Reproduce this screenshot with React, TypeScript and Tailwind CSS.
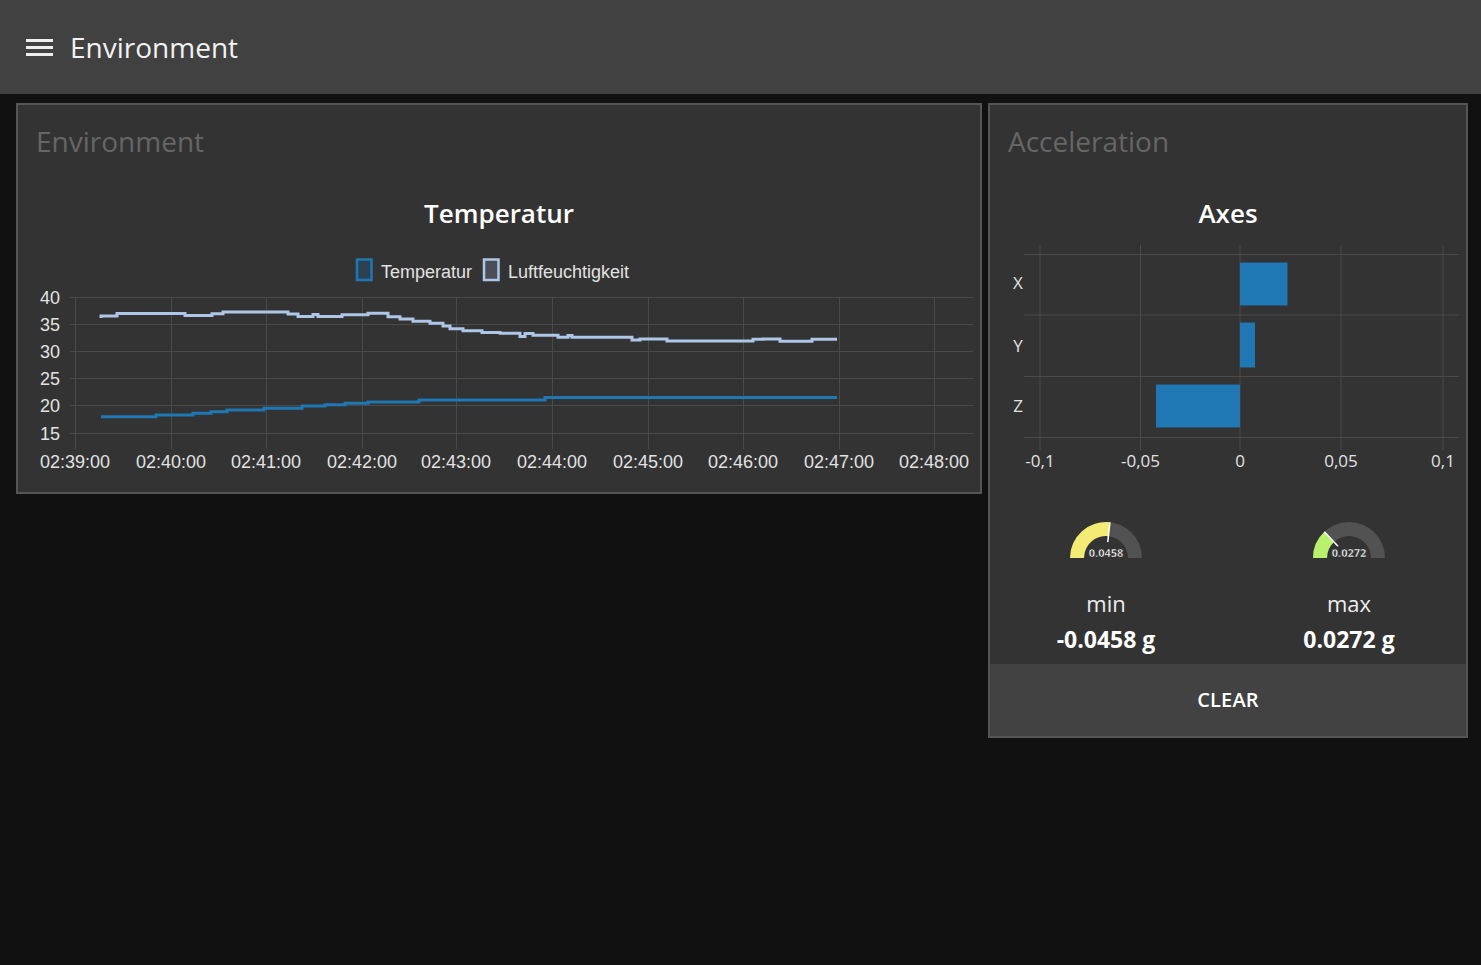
import React from 'react';

const ui = { fontFamily: '"Open Sans", "Noto Sans", sans-serif' };
const chartFont = '"Liberation Sans", Arial, sans-serif';
const uiFont = '"Open Sans", "Noto Sans", sans-serif';

const xTicks = [
  [75, '02:39:00'],
  [171, '02:40:00'],
  [266, '02:41:00'],
  [362, '02:42:00'],
  [456, '02:43:00'],
  [552, '02:44:00'],
  [648, '02:45:00'],
  [743, '02:46:00'],
  [839, '02:47:00'],
  [934, '02:48:00'],
] as const;

const yTicks = [
  [297, '40'],
  [324, '35'],
  [351, '30'],
  [378, '25'],
  [405, '20'],
  [433, '15'],
] as const;

const humidity =
  'M101,318 V316 H117 V313.5 H185 V315.5 H212 V313.7 H223 V312 H288 V314 H298 V316.5 H313 V314.5 H318 V316.5 H342 V314.7 H368 V313.3 H388 V316.7 H400 V319 H413 V321.3 H430 V323.3 H443 V326 H450 V328.7 H463 V330.7 H482 V332.5 H500 V333.3 H520 V336.5 H525 V333.5 H533 V335.3 H558 V337.3 H568 V335.5 H572 V337.3 H632 V340 H640 V339 H667 V341 H753 V339.3 H763 V339 H780 V341.3 H812 V339.3 H837';

const temperature =
  'M101,416.7 H156 V415 H193 V413.3 H211 V411.7 H227 V410 H264 V408.3 H302 V406 H325 V404.7 H345 V403.3 H368 V402 H419 V400 H545 V397.5 H837';

function TempChart() {
  return (
    <svg width={962} height={333} viewBox="18 159 962 333" className="block">
      <text x={499} y={223} textAnchor="middle" fill="#ffffff" fontSize={26} fontWeight={600} fontFamily={uiFont}>
        Temperatur
      </text>
      {/* legend */}
      <rect x={357} y={259.5} width={14.5} height={20.5} fill="#2b4153" stroke="#1f77b4" strokeWidth={2.5} />
      <text x={381} y={277.5} fill="#e2e2e2" fontSize={18} fontFamily={chartFont}>
        Temperatur
      </text>
      <rect x={484} y={259.5} width={14.5} height={20.5} fill="#4a4f57" stroke="#aec7e8" strokeWidth={2.5} />
      <text x={508} y={277.5} fill="#e2e2e2" fontSize={18} fontFamily={chartFont}>
        Luftfeuchtigkeit
      </text>
      {/* grid */}
      {yTicks.map(([y, label]) => (
        <g key={label}>
          <line x1={70} x2={973} y1={y + 0.5} y2={y + 0.5} stroke="#4a4a4a" strokeWidth={1} />
          <text x={60} y={y + 6.5} textAnchor="end" fill="#e2e2e2" fontSize={18} fontFamily={chartFont}>
            {label}
          </text>
        </g>
      ))}
      {xTicks.map(([x, label]) => (
        <g key={label}>
          <line x1={x + 0.5} x2={x + 0.5} y1={297} y2={449} stroke="#4a4a4a" strokeWidth={1} />
          <text x={x} y={468} textAnchor="middle" fill="#e2e2e2" fontSize={18} fontFamily={chartFont}>
            {label}
          </text>
        </g>
      ))}
      <path d={humidity} fill="none" stroke="#aec7e8" strokeWidth={3} />
      <path d={temperature} fill="none" stroke="#1f77b4" strokeWidth={3} />
    </svg>
  );
}

const barX = [
  [1040, '-0,1'],
  [1140.5, '-0,05'],
  [1240, '0'],
  [1341, '0,05'],
  [1443, '0,1'],
] as const;

function AxesChart() {
  return (
    <svg width={476} height={321} viewBox="990 159 476 321" className="block">
      <text x={1228} y={223} textAnchor="middle" fill="#ffffff" fontSize={26} fontWeight={600} fontFamily={uiFont}>
        Axes
      </text>
      {[254.5, 315, 376.5, 437.5].map((y) => (
        <line key={y} x1={1024} x2={1459} y1={y} y2={y} stroke="#4a4a4a" strokeWidth={1} />
      ))}
      {barX.map(([x, label]) => (
        <g key={label}>
          <line x1={x} x2={x} y1={245} y2={450} stroke="#4a4a4a" strokeWidth={1} />
          <text x={x} y={467} textAnchor="middle" fill="#e2e2e2" fontSize={17} fontFamily={uiFont}>
            {label}
          </text>
        </g>
      ))}
      <rect x={1240} y={262.5} width={47.5} height={43} fill="#1f77b4" />
      <rect x={1240} y={322.5} width={15} height={45} fill="#1f77b4" />
      <rect x={1156} y={384.5} width={84} height={43} fill="#1f77b4" />
      {[
        [283, 'X'],
        [346, 'Y'],
        [406, 'Z'],
      ].map(([y, l]) => (
        <text key={l} x={1018} y={(y as number) + 6} textAnchor="middle" fill="#e2e2e2" fontSize={17} fontFamily={uiFont}>
          {l}
        </text>
      ))}
    </svg>
  );
}

function Gauge({ frac, color, label }: { frac: number; color: string; label: string }) {
  const cx = 40;
  const cy = 38;
  const R = 36;
  const r = 22;
  const a = Math.PI * (1 - frac);
  const ox = cx + R * Math.cos(a);
  const oy = cy - R * Math.sin(a);
  const ix = cx + r * Math.cos(a);
  const iy = cy - r * Math.sin(a);
  const nx = cx + 16 * Math.cos(a);
  const ny = cy - 16 * Math.sin(a);
  const full = `M${cx - R},${cy} A${R},${R} 0 0 1 ${cx + R},${cy} L${cx + r},${cy} A${r},${r} 0 0 0 ${cx - r},${cy} Z`;
  const part = `M${cx - R},${cy} A${R},${R} 0 0 1 ${ox},${oy} L${ix},${iy} A${r},${r} 0 0 0 ${cx - r},${cy} Z`;
  return (
    <svg width={80} height={40} viewBox="0 0 80 40" className="block">
      <path d={full} fill="#525252" />
      <path d={part} fill={color} />
      <line x1={nx} y1={ny} x2={ox} y2={oy} stroke="#ffffff" strokeWidth={1.5} />
      <text
        x={cx}
        y={37}
        textAnchor="middle"
        fill="#ffffff"
        fontSize={11}
        fontWeight={700}
        fontFamily={uiFont}
        stroke="#222"
        strokeWidth={0.4}
      >
        {label}
      </text>
    </svg>
  );
}

function Stat({ frac, color, gauge, name, value }: { frac: number; color: string; gauge: string; name: string; value: string }) {
  return (
    <div className="flex flex-col items-center">
      <div className="mt-[40px]">
        <Gauge frac={frac} color={color} label={gauge} />
      </div>
      <div className="mt-[28px] text-[22px] leading-[30px] text-[#eeeeee]">{name}</div>
      <div className="mt-[6px] text-[23px] leading-[30px] font-bold text-white">{value}</div>
    </div>
  );
}

export default function App() {
  return (
    <div className="min-h-screen bg-[#111111]" style={ui}>
      <header className="h-[94px] bg-[#414141] flex items-center pl-[26px]">
        <div className="flex flex-col gap-[4px] w-[27px]">
          <div className="h-[3px] bg-[#eeeeee]" />
          <div className="h-[3px] bg-[#eeeeee]" />
          <div className="h-[3px] bg-[#eeeeee]" />
        </div>
        <h1 className="ml-[17px] text-[28px] leading-[36px] text-[#f2f2f2]">Environment</h1>
      </header>

      <main className="flex items-start gap-[6px] pl-[16px] pt-[9px]">
        <section className="w-[966px] h-[391px] bg-[#333333] border-2 border-[#555555]">
          <div className="pl-[18px] pt-[18px] text-[28px] leading-[36px] text-[#666666]">Environment</div>
          <TempChart />
        </section>

        <section className="w-[480px] bg-[#333333] border-2 border-[#555555]">
          <div className="pl-[18px] pt-[18px] text-[28px] leading-[36px] text-[#666666]">Acceleration</div>
          <AxesChart />
          <div className="flex gap-[10px] h-[184px]">
            <div className="w-[232px]">
              <Stat frac={0.535} color="#f3eb74" gauge="0.0458" name="min" value="-0.0458 g" />
            </div>
            <div className="w-[234px]">
              <Stat frac={0.26} color="#b8f26c" gauge="0.0272" name="max" value="0.0272 g" />
            </div>
          </div>
          <button className="w-full h-[72px] bg-[#424242] text-white text-[20px] font-semibold tracking-[0.01em]">
            CLEAR
          </button>
        </section>
      </main>
    </div>
  );
}
